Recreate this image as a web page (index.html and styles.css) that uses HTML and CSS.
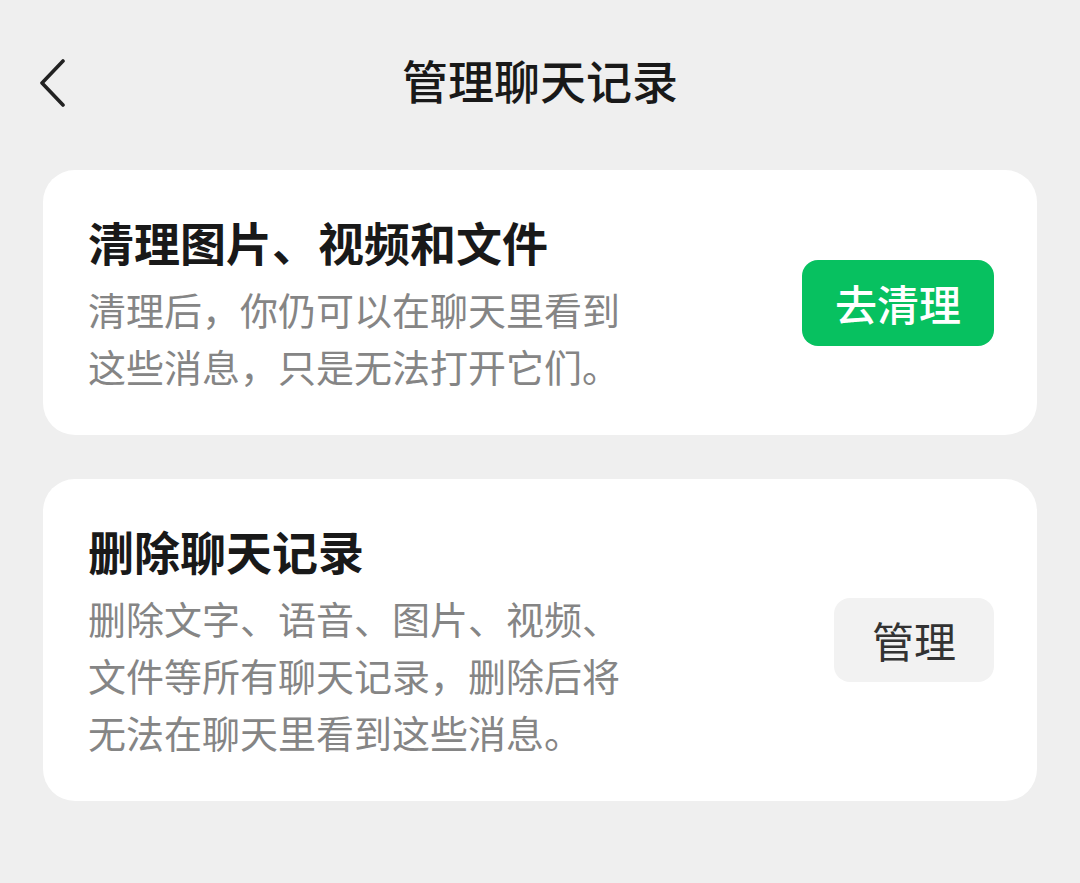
FILE: index.html
```html
<!DOCTYPE html>
<html lang="zh-CN">
<head>
    <meta charset="UTF-8">
    <meta name="viewport" content="width=device-width, initial-scale=1.0">
    <title>管理聊天记录</title>
    <link rel="stylesheet" href="styles.css">
</head>
<body>
    <div class="header">
        <div class="back">
            <svg width="30" height="48" viewBox="0 0 30 48">
                <polyline points="25,2 4,24 25,46" fill="none" stroke="#222" stroke-width="3.6" stroke-linecap="round" stroke-linejoin="round"/>
            </svg>
        </div>
        <div class="title">管理聊天记录</div>
        <div></div>
    </div>

    <div class="list">
        <div class="card">
            <div class="info">
                <div class="card-title">清理图片、视频和文件</div>
                <div class="card-desc">清理后，你仍可以在聊天里看到这些消息，只是无法打开它们。</div>
            </div>
            <button class="btn green">去清理</button>
        </div>

        <div class="card">
            <div class="info">
                <div class="card-title">删除聊天记录</div>
                <div class="card-desc">删除文字、语音、图片、视频、文件等所有聊天记录，删除后将无法在聊天里看到这些消息。</div>
            </div>
            <button class="btn gray">管理</button>
        </div>
    </div>
</body>
</html>
```

FILE: styles.css
```css
*{
    margin: 0;
    padding: 0;
    box-sizing: border-box;
}

body{
    background-color: #efefef;
    font-family: "Noto Sans CJK SC", "Noto Sans", sans-serif;
    color: #191919;
}

.header{
    height: 166px;
    display: grid;
    grid-template-columns: 1fr auto 1fr;
    align-items: center;
}

.back{
    padding-left: 38px;
    display: flex;
    align-items: center;
}

.title{
    font-size: 46px;
    font-weight: 500;
    line-height: 56px;
    margin-bottom: 8px;
}

.list{
    padding: 4px 43px 0;
    display: flex;
    flex-direction: column;
    gap: 44px;
}

.card{
    background-color: #fff;
    border-radius: 32px;
    padding: 41px 43px 41px 45px;
    display: flex;
    align-items: center;
    justify-content: space-between;
}

.card-title{
    font-size: 46px;
    font-weight: 700;
    line-height: 60px;
    margin-bottom: 9px;
}

.card-desc{
    font-size: 38px;
    line-height: 57px;
    color: #858585;
    max-width: 545px;
}

.btn{
    border: none;
    font-family: inherit;
    font-size: 42px;
    line-height: 50px;
    border-radius: 16px;
    height: 86px;
    cursor: pointer;
}

.green{
    width: 192px;
    background-color: #07c160;
    color: #fff;
    font-weight: 500;
}

.gray{
    width: 160px;
    height: 84px;
    background-color: #f2f2f2;
    color: #333;
}
```
